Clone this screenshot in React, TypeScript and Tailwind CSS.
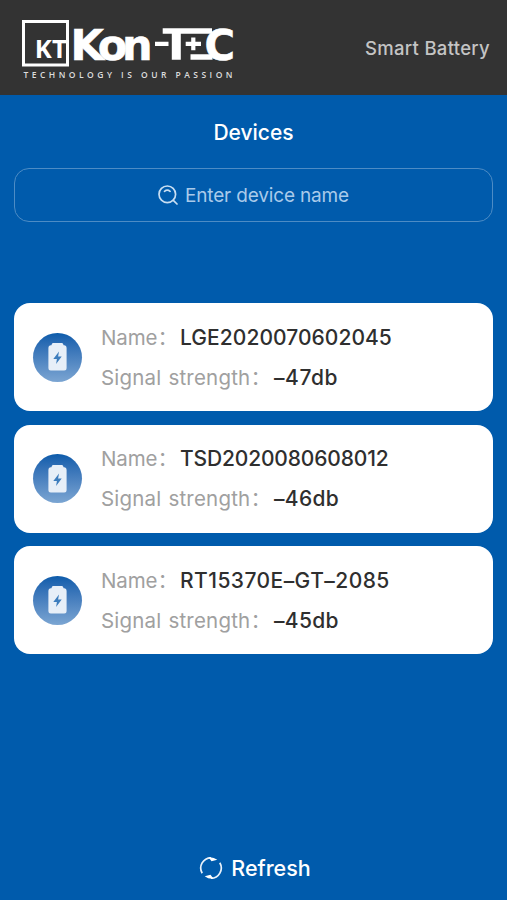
const sans = "font-['Inter','Noto_Sans_CJK_SC',sans-serif]";

const devices = [
  { name: 'LGE2020070602045', signal: '–47db', nameSpacing: 'tracking-[0.05px]', signalSpacing: 'tracking-[0.6px]' },
  { name: 'TSD2020080608012', signal: '–46db', nameSpacing: 'tracking-[-0.15px]', signalSpacing: 'tracking-[0.3px]' },
  { name: 'RT15370E–GT–2085', signal: '–45db', nameSpacing: 'tracking-[0.45px]', signalSpacing: 'tracking-[0.3px]' },
];

function Logo() {
  return (
    <svg className="overflow-visible" width="216" height="70" viewBox="20 14 216 70" fill="#fff" role="img" aria-label="Kon-TEC">
      <path d="M23.500 21.500h44v43.500h-44z" fill="none" stroke="#fff" strokeWidth="3" />
      <text x="34.800" y="58" fontFamily="Open Sans" fontWeight="700" fontSize="24.500" textLength="32" lengthAdjust="spacingAndGlyphs">KT</text>
      <text x="70.500" y="59.700" fontFamily="DejaVu Sans" fontWeight="700" fontSize="43" stroke="#fff" strokeWidth="0.600" textLength="82" lengthAdjust="spacing">Kon</text>
      <path d="M155 41.700h13.500v4.300H155zM162.700 28.300H212v5.500h-31.200v25.900h-9V33.800h-9.100z" />
      <path d="M185.700 41.700h5.500v-4.200h4.200v4.200h5.600V46h-5.600v4.300h-4.200V46h-5.500zM190.500 54.300h22v5.400h-22z" />
      <text x="204.500" y="59.700" fontFamily="DejaVu Sans" fontWeight="700" fontSize="43" stroke="#fff" strokeWidth="0.600" textLength="30.500" lengthAdjust="spacingAndGlyphs">C</text>
      <text x="23.500" y="78" fontFamily="Open Sans" fontWeight="600" fontSize="8.500" fill="#ddd" textLength="209" lengthAdjust="spacing">TECHNOLOGY IS OUR PASSION</text>
    </svg>
  );
}

function SearchIcon() {
  return (
    <svg className="shrink-0" width="20" height="20" viewBox="0 0 20 20" fill="none" stroke="#c8def2" strokeWidth="1.700" strokeLinecap="round">
      <circle cx="9.300" cy="9.300" r="8.300" />
      <path d="M15.300 15.300l3.700 3.700M6.500 6.300q2.800-2.200 5.600 0" />
    </svg>
  );
}

function BatteryIcon() {
  return (
    <div className="flex size-[49px] shrink-0 items-center justify-center rounded-full bg-linear-to-b from-[#0b5cab] to-[#7ba5d2]">
      <svg width="19" height="28" viewBox="0 0 19 28">
        <path d="M5.200 0h8.600q1 0 1.300 1l.5 1.200h.8q2.200.3 2.200 2.500v20.500q0 2.300-2.300 2.300H2.700Q.4 27.500.4 25.200V4.700q0-2.200 2.200-2.500h.8L3.900 1q.3-1 1.300-1z" fill="#e7eff8" />
        <path d="M11 8.500L5.300 16h3.600l-.8 5L13.700 13.500h-3.600z" fill="#3d7dbd" />
      </svg>
    </div>
  );
}

function RefreshIcon() {
  return (
    <svg className="shrink-0" width="24" height="24" viewBox="0 0 24 24" fill="none" stroke="#e8f1fa" strokeWidth="1.700">
      <path d="M3.200 17.200A10.200 10.200 0 0 1 12 1.800M20.800 6.800A10.200 10.200 0 0 1 12 22.200" />
      <path d="M9.500 1.300Q14.500 .8 18.300 3.800L12.500 5.200zM14.500 22.700Q9.500 23.200 5.700 20.200L11.500 18.800z" fill="#fff" stroke="none" />
    </svg>
  );
}

export default function App() {
  return (
    <div className={`flex h-[900px] w-full flex-col bg-[#005bac] ${sans}`}>
      <header className="flex h-[95px] shrink-0 items-start justify-between bg-[#333] pl-5 pr-[17px] pt-[14px]">
        <Logo />
        <span className="mt-[20px] text-[18.500px] leading-7 font-medium tracking-[0.3px] text-[#c4c4c4]">Smart Battery</span>
      </header>

      <main className="flex grow flex-col px-[14px]">
        <h1 className="mt-[23px] text-center text-[21px] leading-[30px] font-medium text-white">Devices</h1>
        <div className="mt-[20px] flex h-[54px] items-center justify-center gap-[7px] rounded-[15px] border border-[#4d8cc5] text-[#a9caea]">
          <SearchIcon />
          <span className="pt-[2px] text-[19px] leading-6 tracking-[-0.16px]">Enter device name</span>
        </div>

        <ul className="mt-[81px] flex flex-col gap-[13.500px]">
          {devices.map((d) => (
            <li key={d.name} className="flex h-[108px] items-center gap-[19px] rounded-[16px] bg-white pl-[19px]">
              <BatteryIcon />
              <div className="flex flex-col gap-[10px] pt-px text-[20.500px] leading-[30px] text-[#a0a0a0]">
                <p className="flex h-[30px] whitespace-nowrap">
                  <span className="w-[79px] font-normal tracking-[-0.1px]">Name：</span>
                  <span className={`text-[21px] font-medium text-[#2f2f2f] ${d.nameSpacing}`}>{d.name}</span>
                </p>
                <p className="flex h-[30px] whitespace-nowrap">
                  <span className="w-[173px] font-normal tracking-[0.2px] [word-spacing:1px]">Signal strength：</span>
                  <span className={`text-[21px] font-medium text-[#2f2f2f] ${d.signalSpacing}`}>{d.signal}</span>
                </p>
              </div>
            </li>
          ))}
        </ul>
      </main>

      <button className="flex h-[65px] shrink-0 items-center justify-center gap-[8px] pl-[3px] text-white">
        <RefreshIcon />
        <span className="text-[21.500px] font-medium leading-[30px]">Refresh</span>
      </button>
    </div>
  );
}
